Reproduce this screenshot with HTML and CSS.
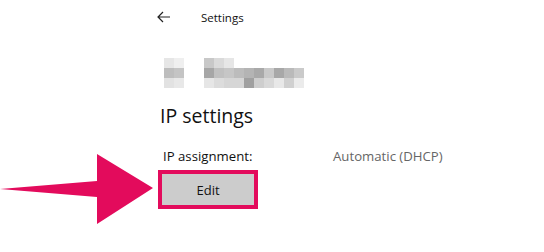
FILE: index.html
```html
<!DOCTYPE html>
<html>
<head>
<meta charset="utf-8">
<link rel="stylesheet" href="styles.css">
</head>
<body>
<div class="page">
  <header class="topbar">
    <svg class="back" width="14" height="12" viewBox="0 0 14 12"><path d="M6 1 L1 6 L6 11 M1 6 H13" fill="none" stroke="#222" stroke-width="1.2"/></svg>
    <span class="title">Settings</span>
  </header>
  <div class="blur">
    <div class="blk g1">
      <i style="background:#e6e6e6"></i><i style="background:#efefef"></i>
      <i style="background:#bdbdbd"></i><i style="background:#c4c4c4"></i>
      <i style="background:#e2e2e2"></i><i style="background:#e8e8e8"></i>
    </div>
    <div class="blk g2">
      <i style="background:#c8c8c8"></i><i style="background:#dadada"></i><i style="background:#e6e6e6"></i><i></i><i></i><i></i><i></i><i></i><i></i><i></i>
      <i style="background:#a6a6a6"></i><i style="background:#c0c0c0"></i><i style="background:#c6c6c6"></i><i style="background:#bcbcbc"></i><i style="background:#b4b4b4"></i><i style="background:#a9a9a9"></i><i style="background:#c9c9c9"></i><i style="background:#a8a8a8"></i><i style="background:#bababa"></i><i style="background:#cacaca"></i>
      <i style="background:#e6e6e6"></i><i style="background:#dcdcdc"></i><i style="background:#d6d6d6"></i><i style="background:#d6d6d6"></i><i style="background:#a0a0a0"></i><i style="background:#cecece"></i><i style="background:#d9d9d9"></i><i style="background:#e8e8e8"></i><i style="background:#d0d0d0"></i><i style="background:#ebebeb"></i>
    </div>
  </div>
  <h1 class="heading">IP settings</h1>
  <div class="row">
    <span class="label">IP assignment:</span>
    <span class="value">Automatic (DHCP)</span>
  </div>
  <button class="edit">Edit</button>
</div>
<svg class="callout" width="160" height="80" viewBox="0 0 160 80"><polygon points="0,35 97,27 97,0 153,34 97,70 97,43" fill="#e30b5c"/></svg>
</body>
</html>
```
FILE: styles.css
```css
html, body {
  margin: 0;
  background: #fff;
}
body {
  font-family: "Open Sans", "Noto Sans", sans-serif;
  color: #111;
  position: relative;
  width: 544px;
  height: 252px;
  overflow: hidden;
}
.page {
  padding-left: 157px;
  display: flex;
  flex-direction: column;
  align-items: flex-start;
}
.topbar {
  display: flex;
  align-items: center;
  height: 34px;
  gap: 30px;
}
.back {
  display: block;
}
.title {
  font-size: 11.5px;
  color: #111;
}
.blur {
  display: flex;
  gap: 20px;
  margin-left: 7px;
  margin-top: 24px;
}
.blk {
  display: grid;
  grid-auto-rows: 10px;
  grid-template-columns: repeat(var(--c), 10px);
}
.g1 { --c: 2; }
.g2 { --c: 10; }
.blk i { display: block; }
.heading {
  font-weight: 400;
  font-size: 19.5px;
  line-height: 26px;
  margin: 15px 0 0 3px;
}
.row {
  display: flex;
  margin-top: 19px;
  margin-left: 6px;
  font-size: 13.2px;
  line-height: 17px;
}
.label {
  width: 170px;
  color: #111;
}
.value {
  color: #666;
}
.edit {
  margin-top: 5px;
  margin-left: 1px;
  width: 100px;
  height: 39px;
  border: 4px solid #e30b5c;
  background: #cccccc;
  font-family: inherit;
  font-size: 13px;
  color: #111;
  padding: 0;
}
.callout {
  position: absolute;
  left: 0;
  top: 154px;
}
```
